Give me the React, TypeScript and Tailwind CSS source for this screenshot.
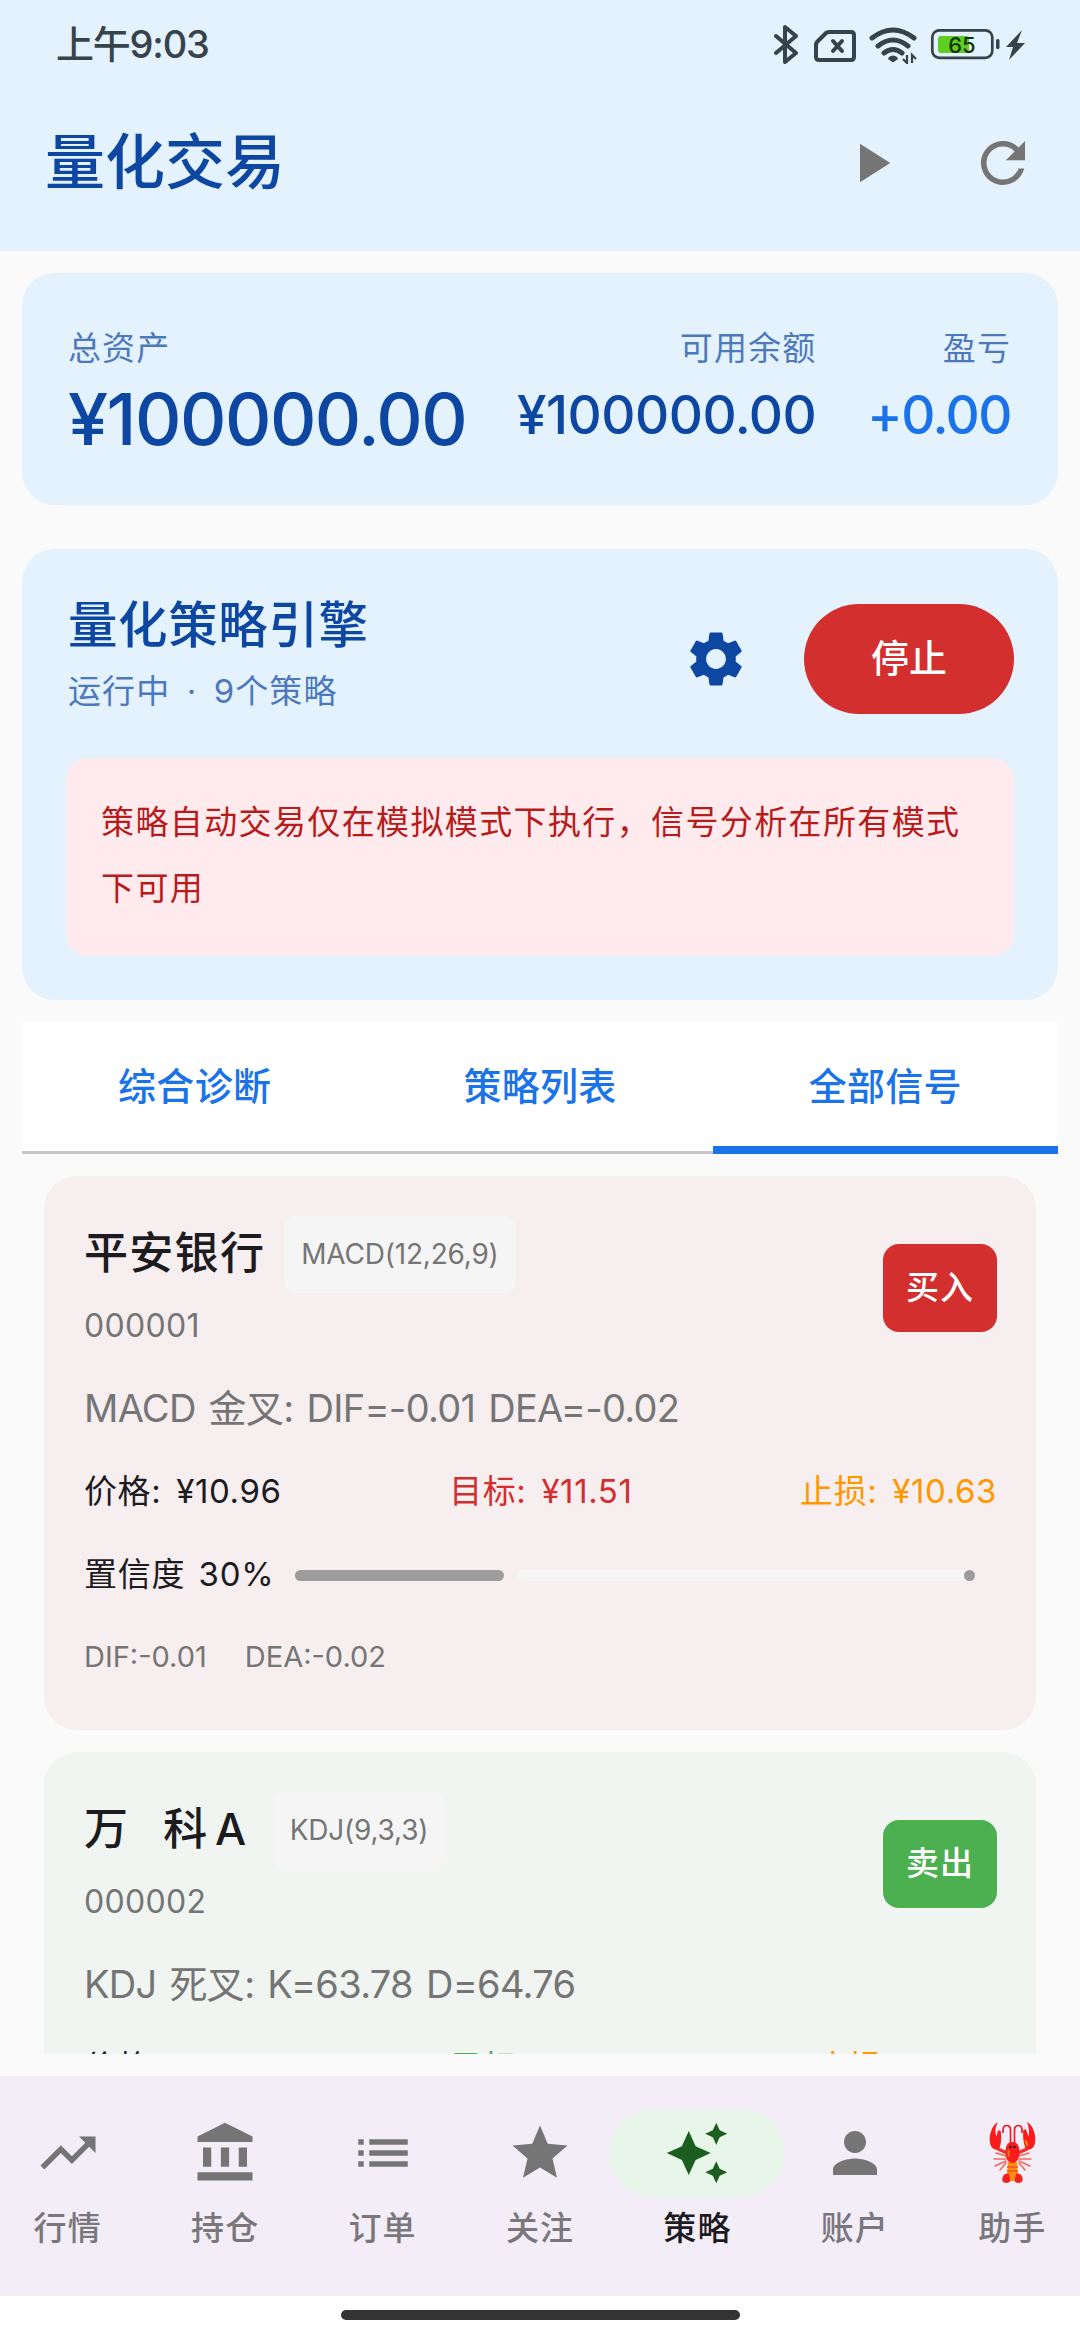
import type { ReactNode } from "react";
import type { IconType } from "react-icons";
import {
  MdAccountBalance,
  MdAutoAwesome,
  MdList,
  MdPerson,
  MdPlayArrow,
  MdRefresh,
  MdSettings,
  MdStar,
  MdTrendingUp,
} from "react-icons/md";

type Signal = {
  name: ReactNode;
  code: string;
  strategy: string;
  side: "buy" | "sell";
  reason: string;
  price: string;
  target: string;
  stop: string;
  confidence?: number;
  indicators?: string[];
};

const SIGNALS: Signal[] = [
  {
    name: "平安银行",
    code: "000001",
    strategy: "MACD(12,26,9)",
    side: "buy",
    reason: "MACD 金叉: DIF=-0.01 DEA=-0.02",
    price: "¥10.96",
    target: "¥11.51",
    stop: "¥10.63",
    confidence: 30,
    indicators: ["DIF:-0.01", "DEA:-0.02"],
  },
  {
    name: (
      <>
        万<span className="inline-block w-[34px]" />科<span className="inline-block w-[45px] text-center">A</span>
      </>
    ),
    code: "000002",
    strategy: "KDJ(9,3,3)",
    side: "sell",
    reason: "KDJ 死叉: K=63.78 D=64.76",
    price: "¥3.25",
    target: "¥3.09",
    stop: "¥3.35",
  },
];

const TABS = ["综合诊断", "策略列表", "全部信号"];
const ACTIVE_TAB = "全部信号";

const NAV_ITEMS: { label: string; icon: IconType | null }[] = [
  { label: "行情", icon: MdTrendingUp },
  { label: "持仓", icon: MdAccountBalance },
  { label: "订单", icon: MdList },
  { label: "关注", icon: MdStar },
  { label: "策略", icon: MdAutoAwesome },
  { label: "账户", icon: MdPerson },
  { label: "助手", icon: null },
];
const ACTIVE_NAV = "策略";

function LobsterIcon() {
  return (
    <svg width="66" height="66" viewBox="0 0 66 66" fill="none">
      <g stroke="#f4695f" strokeWidth="1.6" strokeLinecap="round">
        <path d="M27 36l-10-3M27 39l-12 0M27 41l-11 5M27 43l-6 7" />
        <path d="M40 36l10-3M40 39l12 0M40 41l11 5M40 43l6 7" />
      </g>
      <path d="M31.500 28V10c0-6-7.500-6-7.500 0v3M35.500 28V10c0-6 7.500-6 7.500 0v3" stroke="#e8202a" strokeWidth="1.7" />
      <path d="M28 33l-9-4v-3M39 33l9-4v-3" stroke="#f3312c" strokeWidth="3.4" />
      <path
        d="M19 2c-6 3-9.500 14-8 21 1.500 7 7.500 8.500 10 3.500 1.500-4 1.500-12 .5-16h-2.500l-1.500 6c-2-5-1-10 1.500-14.500z"
        fill="#fa1c1c"
      />
      <path
        d="M48 2c6 3 9.500 14 8 21-1.500 7-7.500 8.500-10 3.500-1.500-4-2.500-12-1.500-17h2.500l2.500 7c1-5 .5-10-1.500-14.500z"
        fill="#fa1c1c"
      />
      <path d="M46.500 20l2 6" stroke="#ff8c0a" strokeWidth="2" />
      <path d="M29 42h9l1 16h-11z" fill="#ff8c0a" />
      <path d="M28 47h11M28 51h11" stroke="#f4511e" strokeWidth="1.4" />
      <path d="M33.500 22c5 0 7 4 7 10 0 7-3 11-7 11s-7-4-7-11c0-6 2-10 7-10z" fill="#fa1c1c" />
      <path d="M29.500 30v7" stroke="#ff7a1a" strokeWidth="2" />
      <path d="M30.500 54c-5-2-8 3-7 7 2 3 7 2 8 0zM36.500 54c5-2 8 3 7 7-2 3-7 2-8 0z" fill="#f3211f" />
      <path d="M30 54h7l-1.500 7h-4z" fill="#ff8c0a" />
      <circle cx="31.500" cy="27" r="1.300" fill="#402020" />
      <circle cx="35.500" cy="27" r="1.300" fill="#402020" />
    </svg>
  );
}

function StatusBar() {
  return (
    <div className="flex h-[88px] items-center justify-between pl-[56px] pr-[54px] text-[#37424a]">
      <span className="text-[38px] font-medium leading-none tracking-[-1.2px]">上午9:03</span>
      <svg width="252" height="40" viewBox="0 0 252 40" fill="none" stroke="currentColor">
        <path d="M2 12l20 17-11 9V3l11 9L2 29" strokeWidth="4" strokeLinejoin="round" strokeLinecap="round" />
        <path d="M43 18l9-9q1-1 3-1h22q3 0 3 3v22q0 3-3 3H45q-3 0-3-3V20z" strokeWidth="4" strokeLinejoin="round" />
        <path d="M59 17l9 10M68 17L59 27" strokeWidth="4" strokeLinecap="round" />
        <path d="M98 14q21-16 42 0M104 22q15-12 30 0M110 29q9-7 18 0" strokeWidth="5" strokeLinecap="round" />
        <path d="M115 33q4-3 8 0l1 2-5 3.500-5-3.500z" fill="currentColor" stroke="none" />
        <path d="M133 31v8l-4-4M138 39v-8l4 4" strokeWidth="2.200" />
        <rect x="158.300" y="6.300" width="60" height="27.500" rx="7" strokeWidth="2.700" />
        <rect x="164" y="12" width="31" height="17" rx="3" fill="#5fcf1f" stroke="none" />
        <text x="188" y="28.500" textAnchor="middle" fontSize="22" fontWeight="500" fill="#14310a" stroke="none">
          65
        </text>
        <rect x="222" y="15" width="3.500" height="10" rx="1.500" fill="currentColor" stroke="none" />
        <path d="M248 6l-16 17h7l-4 13 16-17h-8z" fill="currentColor" stroke="none" />
      </svg>
    </div>
  );
}

function TopBar() {
  return (
    <header className="h-[251px] bg-[#e3f2fd]">
      <StatusBar />
      <div className="flex h-[150px] items-center pl-[45px] pr-[11px]">
        <h1 className="flex-1 pb-[3px] text-[60px] font-medium leading-none text-[#0d47a1]">量化交易</h1>
        <button className="flex size-[132px] items-center justify-center text-[#757575]">
          <MdPlayArrow size={66} />
        </button>
        <button className="flex size-[132px] items-center justify-center text-[#757575]">
          <MdRefresh size={66} />
        </button>
      </div>
    </header>
  );
}

function AssetCard() {
  return (
    <section className="flex h-[232px] justify-between rounded-[33px] bg-[#e3f2fd] pl-[46px] pr-[47px] pt-11 text-[#0d47a1]">
      <div>
        <div className="text-[33px] leading-[62px] tracking-[1.1px] opacity-70">总资产</div>
        <div className="text-[72px] font-medium leading-[80px] tracking-[-1.5px]">¥100000.00</div>
      </div>
      <div className="flex gap-[51px] text-right">
        <div>
          <div className="text-[33px] leading-[62px] tracking-[1.1px] opacity-70">可用余额</div>
          <div className="text-[53px] font-medium leading-[72px] tracking-[-0.5px]">¥100000.00</div>
        </div>
        <div>
          <div className="text-[33px] leading-[62px] tracking-[1.1px] opacity-70">盈亏</div>
          <div className="text-[53px] font-medium leading-[72px] tracking-[-1.5px] text-[#1a73e8]">+0.00</div>
        </div>
      </div>
    </section>
  );
}

function EngineCard() {
  return (
    <section className="rounded-[33px] bg-[#e3f2fd] p-11">
      <div className="flex h-[132px] items-center text-[#0d47a1]">
        <div className="flex-1 pb-[3px] pl-[2px]">
          <h2 className="text-[49.5px] font-medium leading-[66px] tracking-[0.6px]">量化策略引擎</h2>
          <p className="text-[33px] leading-[66px] tracking-[1.1px] opacity-70 [word-spacing:6px]">运行中 · 9个策略</p>
        </div>
        <button className="mr-[22px] flex size-[132px] items-center justify-center">
          <MdSettings size={66} />
        </button>
        <button className="h-[110px] w-[210px] rounded-full bg-[#d32f2f] pb-[2px] text-[38px] font-medium text-white">
          停止
        </button>
      </div>
      <p className="mt-[33px] rounded-[22px] bg-[#ffebee] pt-[31px] pr-[31px] pb-[35px] pl-[35px] text-[33px] leading-[66px] tracking-[1.375px] text-[#b71c1c]">
        策略自动交易仅在模拟模式下执行，信号分析在所有模式下可用
      </p>
    </section>
  );
}

function TabBar() {
  return (
    <div className="mt-[22px] flex h-[132px] rounded-t-[4px] bg-white">
      {TABS.map((tab) => (
        <button
          key={tab}
          className={`flex-1 text-[38px] font-medium tracking-[0.3px] text-[#1a73e8] ${
            tab === ACTIVE_TAB ? "border-b-8 border-[#1a73e8] pt-[5px]" : "border-b-3 border-[#c8c8c8]"
          }`}
        >
          {tab}
        </button>
      ))}
    </div>
  );
}

function Confidence({ value }: { value: number }) {
  return (
    <div className="mt-[18px] flex h-[66px] items-center">
      <span className="w-[211px] text-[33px] tracking-[0.8px] [word-spacing:3px]">置信度 {value}%</span>
      <div className="flex w-[680px] gap-[12px]">
        <div className="h-[11px] rounded-full bg-[#9e9c9c]" style={{ width: `${value + 0.8}%` }} />
        <div className="flex h-[11px] flex-1 justify-end rounded-full bg-[#f5f5f5]">
          <div className="size-[11px] rounded-full bg-[#9e9c9c]" />
        </div>
      </div>
    </div>
  );
}

function SignalCard({ signal }: { signal: Signal }) {
  const buy = signal.side === "buy";

  return (
    <article
      className={`h-[554px] shrink-0 rounded-[33px] pl-[40px] pr-[39px] pt-[40px] text-[#1c1b1f] ${
        buy ? "bg-[#f7eeef]" : "bg-[#f0f5f1]"
      }`}
    >
      <div className="flex items-center justify-between">
        <div>
          <div className="flex h-[77px] items-center gap-[19px]">
            <h3 className="pb-[3px] text-[44px] font-medium leading-none tracking-[1.3px]">{signal.name}</h3>
            <span className="rounded-[11px] bg-[#f5f5f5] px-[17px] text-[28px] leading-[77px] tracking-[-0.2px] text-[#757575]">
              {signal.strategy}
            </span>
          </div>
          <div className="text-[32px] leading-[66px] tracking-[0.3px] text-[#757575]">{signal.code}</div>
        </div>
        <span
          className={`flex h-[88px] w-[114px] items-center justify-center rounded-[16px] text-[33px] font-medium tracking-[1px] text-white ${
            buy ? "bg-[#d32f2f]" : "bg-[#4caf50]"
          }`}
        >
          {buy ? "买入" : "卖出"}
        </span>
      </div>
      <p className="mt-[16px] text-[38px] leading-[66px] tracking-[-0.7px] text-[#757575] [word-spacing:3px]">
        {signal.reason}
      </p>
      <div className="mt-[17px] flex justify-between text-[33px] leading-[66px] tracking-[0.6px] [word-spacing:5px]">
        <span>价格: {signal.price}</span>
        <span className={buy ? "text-[#d32f2f]" : "text-[#4caf50]"}>目标: {signal.target}</span>
        <span className="text-[#ff9800]">止损: {signal.stop}</span>
      </div>
      {signal.confidence !== undefined && <Confidence value={signal.confidence} />}
      {signal.indicators && (
        <div className="mt-[16px] flex gap-[38px] text-[29px] leading-[66px] text-[#757575]">
          {signal.indicators.map((item) => (
            <span key={item}>{item}</span>
          ))}
        </div>
      )}
    </article>
  );
}

function BottomNav() {
  return (
    <nav className="flex h-[220px] gap-[22px] bg-[#f3edf7] pt-[33px]">
      {NAV_ITEMS.map(({ label, icon: Icon }) => {
        const active = label === ACTIVE_NAV;
        return (
          <div key={label} className="flex w-0 flex-1 flex-col items-center">
            <div
              className={`flex h-[88px] w-[176px] shrink-0 items-center justify-center rounded-full ${
                active ? "bg-[#e8f5e9] text-[#1b5e20]" : "text-[#757575]"
              }`}
            >
              {Icon ? <Icon size={66} /> : <LobsterIcon />}
            </div>
            <span
              className={`text-[33px] font-medium leading-[62px] tracking-[1.1px] ${
                active ? "text-[#1c1b1f]" : "text-[#7a777c]"
              }`}
            >
              {label}
            </span>
          </div>
        );
      })}
    </nav>
  );
}

export default function App() {
  return (
    <div className="flex h-[2340px] w-[1080px] flex-col overflow-hidden bg-[#fafafa] font-[Inter,'Noto_Sans_CJK_SC',sans-serif]">
      <TopBar />
      <main className="flex h-[1825px] flex-col px-[22px] pt-[22px]">
        <AssetCard />
        <div className="h-11" />
        <EngineCard />
        <TabBar />
        <div className="mt-[22px] flex h-[878px] flex-col gap-[22px] overflow-hidden px-[22px]">
          {SIGNALS.map((signal) => (
            <SignalCard key={signal.code} signal={signal} />
          ))}
        </div>
      </main>
      <BottomNav />
      <footer className="flex flex-1 justify-center bg-[#fefefe] pt-[14px]">
        <div className="h-[10px] w-[399px] rounded-full bg-[#333333]" />
      </footer>
    </div>
  );
}
